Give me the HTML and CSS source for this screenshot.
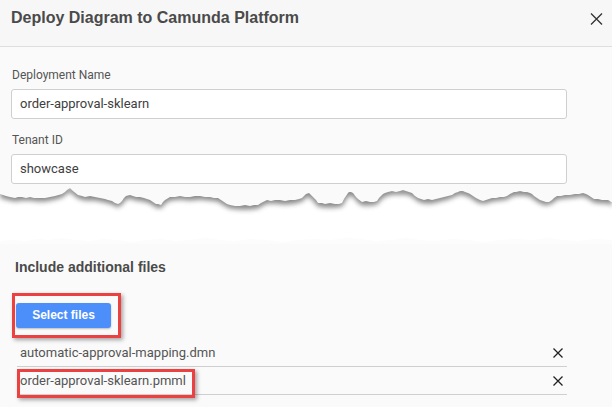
FILE: index.html
```html
<!DOCTYPE html>
<html lang="en">
<head>
<meta charset="utf-8">
<title>Deploy Diagram to Camunda Platform</title>
<link rel="stylesheet" href="styles.css">
</head>
<body>
<div class="modal">
  <div class="modal-header">
    <h2 class="title">Deploy Diagram to Camunda Platform</h2>
    <button class="close" aria-label="Close">
      <svg width="13" height="12" viewBox="0 0 13 12"><path d="M1 0.5 L12 11.5 M12 0.5 L1 11.5" stroke="#333" stroke-width="1.3" fill="none"/></svg>
    </button>
  </div>

  <div class="modal-body">
    <div class="field">
      <label class="label">Deployment Name</label>
      <div class="input">order-approval-sklearn</div>
    </div>
    <div class="field">
      <label class="label">Tenant ID</label>
      <div class="input">showcase</div>
    </div>
  </div>

  <svg class="tear" width="612" height="60" viewBox="0 184 612 60">
    <defs>
      <filter id="blur" x="-5%" y="-50%" width="110%" height="200%">
        <feGaussianBlur stdDeviation="2.5"/>
      </filter>
    </defs>
    <rect x="0" y="184" width="612" height="60" fill="#fff"/>
    <path d="M0 244 L0 241 L12 240 L25 241 L38 239 L50 240 L62 238 L75 240 L90 241 L104 239 L118 240 L132 242 L146 240 L160 239 L176 241 L190 240 L206 238 L220 240 L236 241 L250 239 L266 240 L282 242 L298 240 L314 239 L330 240 L346 238 L360 239 L376 241 L392 240 L406 238 L420 240 L436 241 L452 239 L468 240 L484 242 L500 240 L516 239 L532 240 L548 238 L562 240 L578 241 L594 239 L612 240 L612 244 Z" fill="#fcfcfc"/>
    <path transform="translate(0 3.5)" filter="url(#blur)" fill="#5a5a5a" opacity="0.72" d="M0 184 L0 194 L6 196 L15 198 L22 197 L30 197 L38 198 L45 198 L55 196 L62 194 L67 190 L70 188 L73 191 L78 195 L85 197 L95 197 L105 199 L112 201 L118 204 L122 201 L126 196 L130 195 L136 197 L144 198 L150 200 L156 204 L161 205 L165 200 L170 197 L180 196 L190 197 L200 196 L210 197 L218 198 L224 202 L230 205 L240 206 L250 206 L258 205 L263 202 L267 200 L275 200 L285 201 L295 200 L302 198 L306 194 L309 193 L313 197 L318 203 L325 204 L335 204 L342 203 L346 196 L349 192 L353 193 L358 199 L362 202 L370 202 L377 201 L381 196 L385 193 L392 191 L400 191 L406 191 L412 193 L418 198 L424 200 L432 200 L440 198 L448 196 L455 193 L460 191 L465 192 L470 194 L476 198 L480 200 L486 200 L492 198 L500 197 L507 196 L512 193 L516 192 L524 192 L530 193 L534 196 L540 200 L546 202 L552 200 L557 196 L565 195 L575 194 L583 193 L588 195 L594 199 L602 200 L608 200 L611 202 L612 202 L612 184 Z"/>
    <path fill="#fafafa" d="M0 184 L0 194 L3 195 L6 196 L10 197 L15 198 L18 197 L22 197 L26 198 L30 197 L34 198 L38 198 L45 198 L50 197 L55 196 L62 194 L65 192 L67 190 L70 188 L71 189 L73 191 L78 195 L82 196 L85 197 L90 196 L95 197 L100 198 L105 199 L108 200 L112 201 L115 203 L118 204 L120 203 L122 201 L124 198 L126 196 L130 195 L133 196 L136 197 L140 197 L144 198 L147 199 L150 200 L153 202 L156 204 L158 204 L161 205 L163 202 L165 200 L170 197 L175 197 L180 196 L185 197 L190 197 L195 196 L200 196 L205 197 L210 197 L214 198 L218 198 L221 200 L224 202 L227 204 L230 205 L235 206 L240 206 L245 205 L250 206 L254 205 L258 205 L261 203 L263 202 L267 200 L271 201 L275 200 L280 200 L285 201 L290 200 L295 200 L299 199 L302 198 L304 196 L306 194 L309 193 L311 195 L313 197 L316 200 L318 203 L322 203 L325 204 L330 203 L335 204 L339 204 L342 203 L344 199 L346 196 L348 193 L349 192 L351 192 L353 193 L356 197 L358 199 L362 202 L366 201 L370 202 L374 202 L377 201 L379 198 L381 196 L383 194 L385 193 L388 192 L392 191 L396 192 L400 191 L403 190 L406 191 L409 192 L412 193 L415 196 L418 198 L421 199 L424 200 L428 199 L432 200 L436 199 L440 198 L444 197 L448 196 L452 195 L455 193 L458 192 L460 191 L463 191 L465 192 L468 193 L470 194 L473 196 L476 198 L478 199 L480 200 L483 201 L486 200 L489 199 L492 198 L496 198 L500 197 L504 197 L507 196 L510 194 L512 193 L514 192 L516 192 L520 191 L524 192 L527 192 L530 193 L532 194 L534 196 L537 198 L540 200 L543 201 L546 202 L549 202 L552 200 L554 198 L557 196 L561 196 L565 195 L570 195 L575 194 L579 194 L583 193 L586 194 L588 195 L591 197 L594 199 L598 199 L602 200 L605 200 L608 200 L610 201 L611 202 L612 202 L612 184 Z"/>
  </svg>

  <div class="lower">
    <h3 class="section-title">Include additional files</h3>
    <div class="callout callout-button">
      <button class="btn-primary">Select files</button>
    </div>
    <ul class="file-list">
      <li class="file-row">
        <span class="file-name">automatic-approval-mapping.dmn</span>
        <svg class="remove" width="10" height="10" viewBox="0 0 10 10"><path d="M0.5 0.5 L9.5 9.5 M9.5 0.5 L0.5 9.5" stroke="#222" stroke-width="1.3" fill="none"/></svg>
      </li>
      <li class="file-row">
        <span class="file-name callout-text">order-approval-sklearn.pmml</span>
        <svg class="remove" width="10" height="10" viewBox="0 0 10 10"><path d="M0.5 0.5 L9.5 9.5 M9.5 0.5 L0.5 9.5" stroke="#222" stroke-width="1.3" fill="none"/></svg>
      </li>
    </ul>
  </div>
</div>
</body>
</html>
```

FILE: styles.css
```css
* {
  box-sizing: border-box;
}

html, body {
  margin: 0;
  padding: 0;
}

body {
  width: 612px;
  height: 407px;
  overflow: hidden;
  background: #fafafa;
  font-family: "Liberation Sans", Arial, sans-serif;
}

.modal {
  width: 612px;
}

.modal-header {
  height: 47px;
  display: flex;
  justify-content: space-between;
  align-items: flex-start;
  padding: 8px 9px 0 11px;
  background: #f7f7f7;
  border-bottom: 1px solid #dedede;
}

.title {
  margin: 0;
  font: bold 16px/20px "Liberation Sans", Arial, sans-serif;
  color: #4a4a4a;
}

.close {
  margin-top: 5px;
  padding: 0;
  border: 0;
  background: none;
  width: 13px;
  height: 12px;
  display: block;
}

.close svg {
  display: block;
}

.modal-body {
  padding: 20px 45px 0 11px;
}

.field + .field {
  margin-top: 13px;
}

.label {
  display: block;
  margin: 0 0 6px 1px;
  font: 12px/16px Roboto, "Liberation Sans", sans-serif;
  color: #555;
}

.input {
  height: 30px;
  padding: 0 8px;
  border: 1px solid #cfcfcf;
  border-radius: 3px;
  background: #fff;
  font: 13px/28px Roboto, "Liberation Sans", sans-serif;
  color: #404040;
}

.tear {
  display: block;
}

.lower {
  padding: 15px 45px 0 12px;
}

.section-title {
  margin: 0 0 17px 3px;
  font: bold 14px/17px "Liberation Sans", Arial, sans-serif;
  color: #4a4a4a;
}

.callout {
  border: 3px solid #ec4141;
  box-shadow: 2px 2px 4px rgba(0, 0, 0, 0.35);
}

.callout-button {
  display: inline-flex;
  padding: 7px 7px 7px 1px;
  vertical-align: top;
}

.btn-primary {
  width: 95px;
  height: 25px;
  padding: 0;
  border: 0;
  border-radius: 3px;
  background: #4d8ffa;
  color: #fff;
  font: bold 12px/25px "Liberation Sans", Arial, sans-serif;
  box-shadow: 0 1px 2px rgba(0, 0, 0, 0.25);
}

.file-list {
  list-style: none;
  margin: 1px 0 0 5px;
  padding: 0;
}

.file-row {
  display: flex;
  align-items: center;
  justify-content: space-between;
  height: 28px;
  padding: 0 4px 0 3px;
  border-bottom: 1px solid #cfcfcf;
}

.file-name {
  font: 13px/16px Roboto, "Liberation Sans", sans-serif;
  color: #555;
}

.callout-text {
  position: relative;
}

.callout-text::after {
  content: "";
  position: absolute;
  left: -3px;
  right: -9px;
  top: -4px;
  bottom: -9px;
  border: 3px solid #ec4141;
  box-shadow: 2px 2px 4px rgba(0, 0, 0, 0.35);
}

.remove {
  display: block;
}
```
